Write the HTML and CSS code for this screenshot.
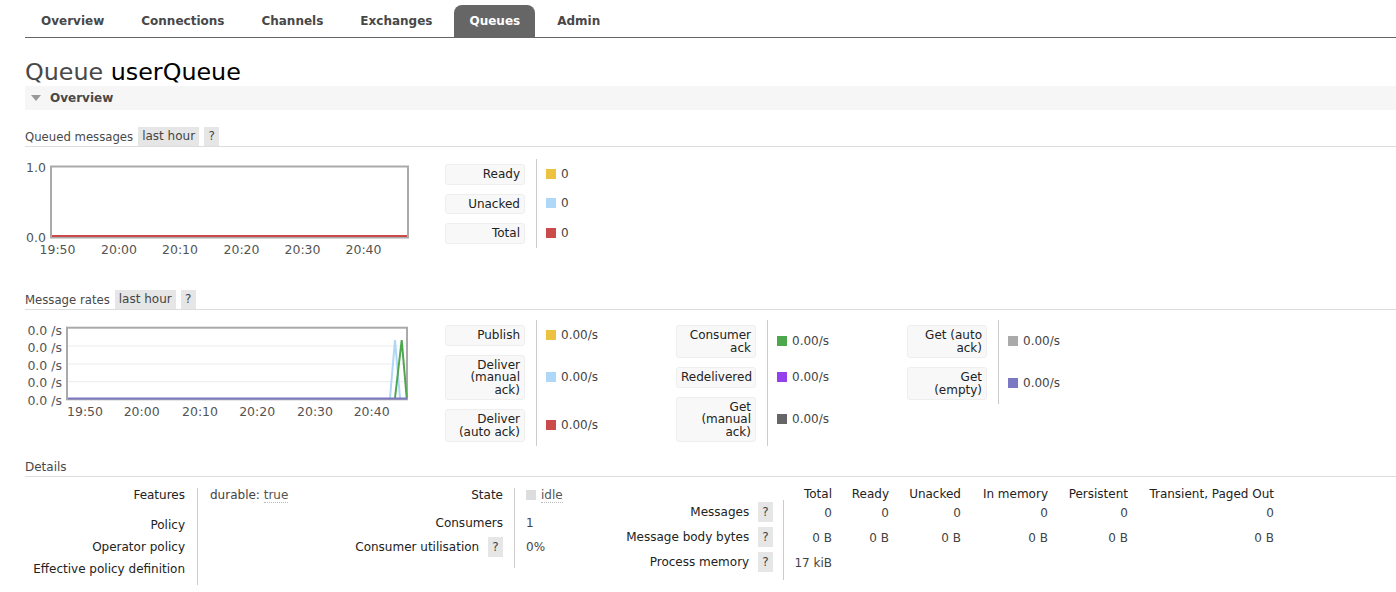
FILE: index.html
```html
<!DOCTYPE html>
<html lang="en">
<head>
    <meta charset="UTF-8">
    <title>RabbitMQ Management: Queue userQueue</title>
    <link rel="stylesheet" href="styles.css">
</head>
<body>
    <ul class="tabs">
        <li>Overview</li>
        <li>Connections</li>
        <li>Channels</li>
        <li>Exchanges</li>
        <li class="active">Queues</li>
        <li>Admin</li>
    </ul>

    <h1><span class="muted">Queue</span> userQueue</h1>

    <div class="section-bar"><span class="arrow"></span>Overview</div>

    <div class="sub-header first">
        <span>Queued messages</span>
        <span class="btn">last hour</span>
        <span class="btn help">?</span>
    </div>
    <div class="graph-row queued">
        <div class="chart">
            <svg width="420" height="90" class="plot">
                <rect x="26" y="7.5" width="357" height="71" fill="#fff" stroke="#aaa" stroke-width="2"/>
                <line x1="27" y1="77" x2="382" y2="77" stroke="#cb4b4b" stroke-width="2"/>
                <text x="21" y="13" text-anchor="end">1.0</text>
                <text x="21" y="83" text-anchor="end">0.0</text>
                <text x="32.5" y="95" text-anchor="middle">19:50</text>
                <text x="94" y="95" text-anchor="middle">20:00</text>
                <text x="155" y="95" text-anchor="middle">20:10</text>
                <text x="216.5" y="95" text-anchor="middle">20:20</text>
                <text x="277.5" y="95" text-anchor="middle">20:30</text>
                <text x="338.5" y="95" text-anchor="middle">20:40</text>
            </svg>
        </div>
        <div class="legend">
            <div class="lg-th"><span>Ready</span></div>
            <div class="lg-td"><i class="sq" style="background:#edc240"></i>0</div>
            <div class="lg-th"><span>Unacked</span></div>
            <div class="lg-td"><i class="sq" style="background:#afd8f8"></i>0</div>
            <div class="lg-th"><span>Total</span></div>
            <div class="lg-td"><i class="sq" style="background:#cb4b4b"></i>0</div>
        </div>
    </div>

    <div class="sub-header rates-head">
        <span>Message rates</span>
        <span class="btn">last hour</span>
        <span class="btn help">?</span>
    </div>
    <div class="graph-row rates">
        <div class="chart">
            <svg width="420" height="100" class="plot">
                <rect x="42" y="7.7" width="340" height="71.6" fill="#fff" stroke="#aaa" stroke-width="2"/>
                <line x1="43" y1="26" x2="381" y2="26" stroke="#ececec" stroke-width="1"/>
                <line x1="43" y1="44" x2="381" y2="44" stroke="#ececec" stroke-width="1"/>
                <line x1="43" y1="61.7" x2="381" y2="61.7" stroke="#ececec" stroke-width="1"/>
                <polyline points="365,78 370,20 375,78" fill="none" stroke="#afd8f8" stroke-width="2"/>
                <polyline points="370,78 376.7,20 381.7,78" fill="none" stroke="#4da74d" stroke-width="2"/>
                <line x1="43" y1="78.5" x2="382" y2="78.5" stroke="#7c79c3" stroke-width="2"/>
                <text x="37" y="14.5" text-anchor="end">0.0 /s</text>
                <text x="37" y="31.8" text-anchor="end">0.0 /s</text>
                <text x="37" y="49.5" text-anchor="end">0.0 /s</text>
                <text x="37" y="66.8" text-anchor="end">0.0 /s</text>
                <text x="37" y="84.5" text-anchor="end">0.0 /s</text>
                <text x="60" y="95.5" text-anchor="middle">19:50</text>
                <text x="116.7" y="95.5" text-anchor="middle">20:00</text>
                <text x="175" y="95.5" text-anchor="middle">20:10</text>
                <text x="232.2" y="95.5" text-anchor="middle">20:20</text>
                <text x="290" y="95.5" text-anchor="middle">20:30</text>
                <text x="346.7" y="95.5" text-anchor="middle">20:40</text>
            </svg>
        </div>
        <div class="legend">
            <div class="lg-th"><span>Publish</span></div>
            <div class="lg-td"><i class="sq" style="background:#edc240"></i>0.00/s</div>
            <div class="lg-th"><span>Deliver<br>(manual<br>ack)</span></div>
            <div class="lg-td"><i class="sq" style="background:#afd8f8"></i>0.00/s</div>
            <div class="lg-th"><span>Deliver<br>(auto ack)</span></div>
            <div class="lg-td"><i class="sq" style="background:#cb4b4b"></i>0.00/s</div>
        </div>
        <div class="legend">
            <div class="lg-th"><span>Consumer<br>ack</span></div>
            <div class="lg-td"><i class="sq" style="background:#4da74d"></i>0.00/s</div>
            <div class="lg-th"><span>Redelivered</span></div>
            <div class="lg-td"><i class="sq" style="background:#9440ed"></i>0.00/s</div>
            <div class="lg-th"><span>Get<br>(manual<br>ack)</span></div>
            <div class="lg-td"><i class="sq" style="background:#666666"></i>0.00/s</div>
        </div>
        <div class="legend short">
            <div class="lg-th"><span>Get (auto<br>ack)</span></div>
            <div class="lg-td"><i class="sq" style="background:#aaaaaa"></i>0.00/s</div>
            <div class="lg-th"><span>Get<br>(empty)</span></div>
            <div class="lg-td"><i class="sq" style="background:#7c79c3"></i>0.00/s</div>
        </div>
    </div>

    <div class="sub-header details-head">
        <span>Details</span>
    </div>
    <div class="details">
        <div class="facts f1">
            <div class="k top">Features</div>
            <div class="v top">durable: <abbr class="dotted">true</abbr></div>
            <div class="k">Policy</div>
            <div class="v"></div>
            <div class="k">Operator policy</div>
            <div class="v"></div>
            <div class="k">Effective policy definition</div>
            <div class="v"></div>
        </div>

        <div class="facts f2">
            <div class="k top">State</div>
            <div class="v top"><i class="state-box"></i><abbr class="dotted">idle</abbr></div>
            <div class="k mid">Consumers</div>
            <div class="v mid">1</div>
            <div class="k low">Consumer utilisation <span class="btn help">?</span></div>
            <div class="v low">0%</div>
        </div>

        <div class="facts f3">
            <div class="h"></div>
            <div class="h">Total</div>
            <div class="h">Ready</div>
            <div class="h">Unacked</div>
            <div class="h">In memory</div>
            <div class="h">Persistent</div>
            <div class="h">Transient, Paged Out</div>

            <div class="k">Messages <span class="btn help">?</span></div>
            <div class="n first">0</div>
            <div class="n">0</div>
            <div class="n">0</div>
            <div class="n">0</div>
            <div class="n">0</div>
            <div class="n">0</div>

            <div class="k">Message body bytes <span class="btn help">?</span></div>
            <div class="n first">0 B</div>
            <div class="n">0 B</div>
            <div class="n">0 B</div>
            <div class="n">0 B</div>
            <div class="n">0 B</div>
            <div class="n">0 B</div>

            <div class="k">Process memory <span class="btn help">?</span></div>
            <div class="n first">17 kiB</div>
            <div class="n"></div>
            <div class="n"></div>
            <div class="n"></div>
            <div class="n"></div>
            <div class="n"></div>
        </div>
    </div>
</body>
</html>
```

FILE: styles.css
```css
* {
    box-sizing: border-box;
}
body {
    margin: 0;
    padding: 0 0 0 25px;
    font-family: "DejaVu Sans", Verdana, sans-serif;
    font-size: 12px;
    color: #222;
    background: #fff;
}
.tabs {
    list-style: none;
    display: flex;
    margin: 0;
    padding: 5px 0 0 1px;
    border-bottom: 1px solid #666;
}
.tabs li {
    height: 32px;
    line-height: 32px;
    padding: 0 15px;
    margin-right: 7px;
    font-weight: bold;
    color: #484848;
    border-radius: 8px 8px 0 0;
}
.tabs li.active {
    background: #666;
    color: #fff;
}
h1 {
    margin: 20px 0 0;
    font-size: 23.8px;
    line-height: 28px;
    font-weight: normal;
    color: #000;
}
h1 .muted {
    color: #484848;
}
.section-bar {
    height: 24px;
    display: flex;
    align-items: center;
    background: #f6f6f6;
    font-weight: bold;
    color: #484848;
}
.arrow {
    width: 0;
    height: 0;
    border-left: 5px solid transparent;
    border-right: 5px solid transparent;
    border-top: 6px solid #999;
    margin: 0 9px 0 6px;
}
.sub-header {
    display: flex;
    align-items: center;
    height: 20px;
    border-bottom: 1px solid #ddd;
    font-size: 11.7px;
    color: #484848;
}
.sub-header.first {
    margin-top: 17px;
}
.sub-header.rates-head {
    margin-top: 41px;
}
.sub-header.details-head {
    margin-top: 11px;
    font-size: 12px;
}
.btn {
    display: inline-block;
    height: 19px;
    line-height: 19px;
    padding: 0 4px;
    margin-left: 5px;
    background: #e6e6e6;
    color: #444;
    font-size: 12px;
}
.btn.help {
    width: 15px;
    padding: 0;
    text-align: center;
}
.graph-row {
    display: flex;
    align-items: flex-start;
}
.graph-row.queued {
    margin-top: 12px;
}
.graph-row.rates {
    margin-top: 10px;
}
.chart {
    width: 420px;
    flex: none;
}
.plot {
    display: block;
    overflow: visible;
}
.plot text {
    font-family: "DejaVu Sans", Verdana, sans-serif;
    font-size: 12.5px;
    fill: #545454;
}
.legend {
    display: grid;
    grid-template-columns: 91px 140px;
    flex: none;
}
.lg-th {
    padding: 5px 11px 4px 0;
}
.lg-th span {
    display: block;
    background: #f8f8f8;
    border: 1px solid #eee;
    border-radius: 3px;
    padding: 3px 4px;
    line-height: 12.5px;
    text-align: right;
    color: #222;
}
.lg-td {
    display: flex;
    align-items: center;
    border-left: 1px solid #ccc;
    padding-left: 9px;
    color: #444;
}
.sq {
    width: 10px;
    height: 10px;
    margin-right: 5px;
}
.details {
    display: flex;
    margin-top: 11px;
}
.facts {
    display: grid;
    line-height: 14px;
}
.facts .k {
    text-align: right;
    color: #222;
}
.facts .v {
    border-left: 1px solid #ccc;
    color: #444;
}
.f1 {
    grid-template-columns: 172px 143px;
    grid-template-rows: 26px 22px 22px 27px;
}
.f1 .k {
    padding: 4px 12px 0 0;
}
.f1 .v {
    padding: 4px 0 0 12px;
}
.f1 .top {
    padding-top: 0;
}
.f2 {
    grid-template-columns: 174px 101px;
    grid-template-rows: 22px 22px 36px;
}
.f2 .k {
    padding-right: 11px;
}
.f2 .v {
    padding-left: 11px;
}
.f2 .mid {
    padding-top: 6px;
}
.f2 .low {
    padding-top: 8px;
}
.f2 .k.low {
    padding-top: 5px;
}
.f2 .k.low .btn {
    height: 20px;
    line-height: 20px;
}
.state-box {
    display: inline-block;
    width: 10px;
    height: 10px;
    background: #ddd;
    margin: 0 5px 0 0;
    vertical-align: -1px;
}
.dotted {
    text-decoration: none;
    border-bottom: 1px dotted #bbb;
    color: #555;
}
.f3 {
    grid-template-columns: 168px 49px 57px 72px 87px 80px 146px;
    grid-template-rows: 12px 25px 25px 30px;
}
.f3 .h {
    text-align: right;
    line-height: 12px;
    color: #222;
}
.f3 .k {
    padding: 2px 10px 0 0;
}
.f3 .k .btn {
    height: 20px;
    line-height: 20px;
    vertical-align: middle;
}
.f3 .n {
    text-align: right;
    padding-top: 6px;
    color: #444;
}
.f3 .n.first {
    border-left: 1px solid #ccc;
}
```
